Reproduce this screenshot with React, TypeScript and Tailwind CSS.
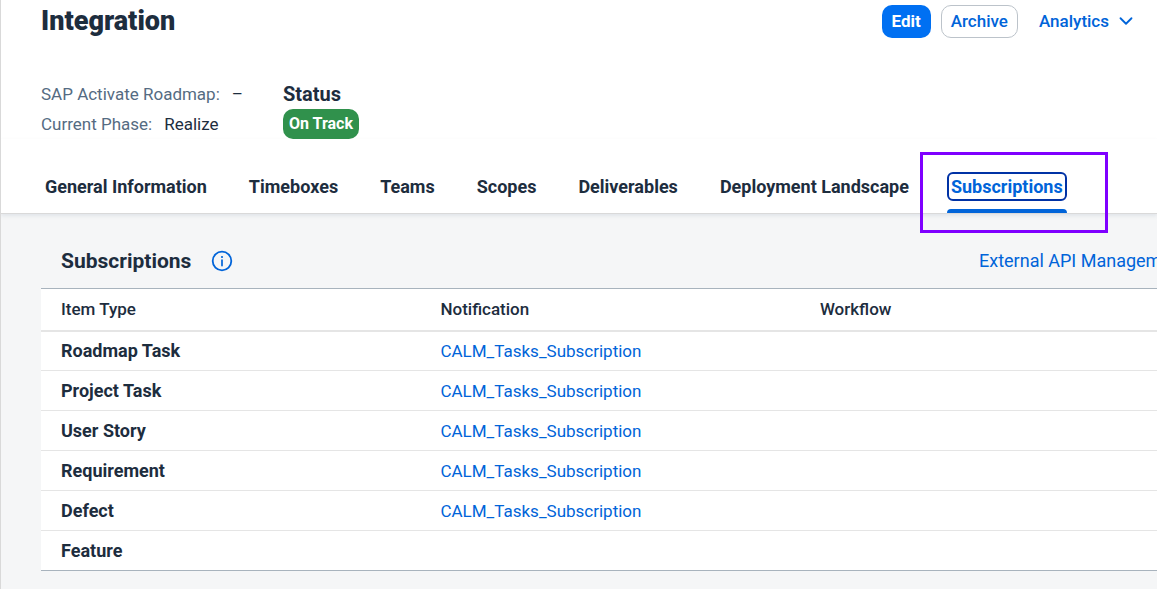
import { useState } from "react";
import { ChevronDown } from "lucide-react";

const TABS = [
  "General Information",
  "Timeboxes",
  "Teams",
  "Scopes",
  "Deliverables",
  "Deployment Landscape",
  "Subscriptions",
];

type SubscriptionRow = {
  itemType: string;
  notification?: string;
};

const ROWS: SubscriptionRow[] = [
  { itemType: "Roadmap Task", notification: "CALM_Tasks_Subscription" },
  { itemType: "Project Task", notification: "CALM_Tasks_Subscription" },
  { itemType: "User Story", notification: "CALM_Tasks_Subscription" },
  { itemType: "Requirement", notification: "CALM_Tasks_Subscription" },
  { itemType: "Defect", notification: "CALM_Tasks_Subscription" },
  { itemType: "Feature" },
];

function InfoIcon() {
  return (
    <svg width="22" height="22" viewBox="0 0 22 22" fill="none" aria-hidden="true">
      <circle cx="11" cy="11" r="9.3" stroke="#0064d9" strokeWidth="1.8" />
      <circle cx="11" cy="7" r="1.1" fill="#0064d9" />
      <path d="M11 10v5.6" stroke="#0064d9" strokeWidth="1.7" strokeLinecap="round" />
    </svg>
  );
}

function PageHeader() {
  return (
    <header className="pl-10 pr-5">
      <div className="flex h-[42px] items-center">
        <h1 className="text-[27px] font-black">Integration</h1>
        <div className="ml-auto flex items-center text-[17px]">
          <button
            type="button"
            className="h-[33px] rounded-[10px] bg-[#0070f2] px-[10px] font-bold text-white"
          >
            Edit
          </button>
          <button
            type="button"
            className="ml-[10px] h-[33px] rounded-[10px] border border-[#bcc3ca] bg-white px-[9px] font-medium text-[#0064d9]"
          >
            Archive
          </button>
          <button
            type="button"
            className="ml-[21px] flex items-center gap-[6px] font-medium text-[#0064d9]"
          >
            Analytics
            <ChevronDown size={22} strokeWidth={2} />
          </button>
        </div>
      </div>

      <div className="flex gap-10 pt-[37px] leading-[30px]">
        <dl className="w-[202px] text-[17px] leading-[30px] whitespace-nowrap">
          <div className="flex gap-3">
            <dt className="text-[#556b82]">SAP Activate Roadmap:</dt>
            <dd>–</dd>
          </div>
          <div className="flex gap-3">
            <dt className="text-[#556b82]">Current Phase:</dt>
            <dd>Realize</dd>
          </div>
        </dl>
        <div>
          <h2 className="text-xl leading-[30px] font-bold">Status</h2>
          <span className="block rounded-[10px] bg-[#30914c] px-[6px] text-base leading-[30px] font-bold text-white">
            On Track
          </span>
        </div>
      </div>
    </header>
  );
}

function TabBar({ active, onSelect }: { active: string; onSelect: (tab: string) => void }) {
  return (
    <nav
      role="tablist"
      className="flex h-[75px] gap-[34px] border-b border-[#d9d9d9] pt-[33px] pl-10 whitespace-nowrap shadow-[0_2px_4px_rgba(85,107,130,0.12)]"
    >
      {TABS.map((tab) => {
        const selected = tab === active;
        return (
          <div key={tab} className="relative flex flex-col">
            <button
              type="button"
              role="tab"
              aria-selected={selected}
              onClick={() => onSelect(tab)}
              className={
                selected
                  ? "h-[30px] rounded-md border-2 border-[#0032a5] px-[2px] font-bold text-[#0064d9]"
                  : "h-[30px] px-1 font-bold"
              }
            >
              {tab}
            </button>
            {selected && <span className="mt-2 h-1 rounded-t-sm bg-[#0064d9]" />}
            {tab === "Subscriptions" && (
              <span className="pointer-events-none absolute -top-5 -right-[41px] -left-[27px] h-[81px] border-[3px] border-[#7f00ff]" />
            )}
          </div>
        );
      })}
    </nav>
  );
}

function SubscriptionTable() {
  return (
    <section className="pl-10">
      <div className="flex h-[74px] items-center pt-5 pl-5">
        <h2 className="text-[21px] font-bold">Subscriptions</h2>
        <button type="button" aria-label="About subscriptions" className="ml-5">
          <InfoIcon />
        </button>
        <div className="ml-auto w-[178px] overflow-hidden whitespace-nowrap">
          <a href="#external-api" className="text-[#0064d9]">
            External API Management
          </a>
        </div>
      </div>

      <table className="w-full table-fixed border-collapse border-y border-[#a8b3bd] bg-white text-left">
        <thead className="text-[17px]">
          <tr className="h-[42px] border-b-2 border-[#e5e5e5]">
            <th className="w-[34%] pl-5 font-medium">Item Type</th>
            <th className="w-[34%] pl-5 font-medium">Notification</th>
            <th className="pl-5 font-medium">Workflow</th>
          </tr>
        </thead>
        <tbody>
          {ROWS.map((row) => (
            <tr key={row.itemType} className="h-10 border-b border-[#e5e5e5] last:border-[#a8b3bd]">
              <th scope="row" className="pl-5 font-bold">
                {row.itemType}
              </th>
              <td className="pl-5 text-[17px]">
                {row.notification && (
                  <a href="#subscription" className="text-[#0064d9]">
                    {row.notification}
                  </a>
                )}
              </td>
              <td />
            </tr>
          ))}
        </tbody>
      </table>
    </section>
  );
}

export default function App() {
  const [tab, setTab] = useState("Subscriptions");

  return (
    <div className="min-h-screen overflow-hidden border-l border-[#d9d9d9] bg-[#f5f6f7] font-[Roboto,sans-serif] text-lg leading-6 text-[#1d2d3e]">
      <div className="bg-white">
        <PageHeader />
        <TabBar active={tab} onSelect={setTab} />
      </div>
      <SubscriptionTable />
    </div>
  );
}
